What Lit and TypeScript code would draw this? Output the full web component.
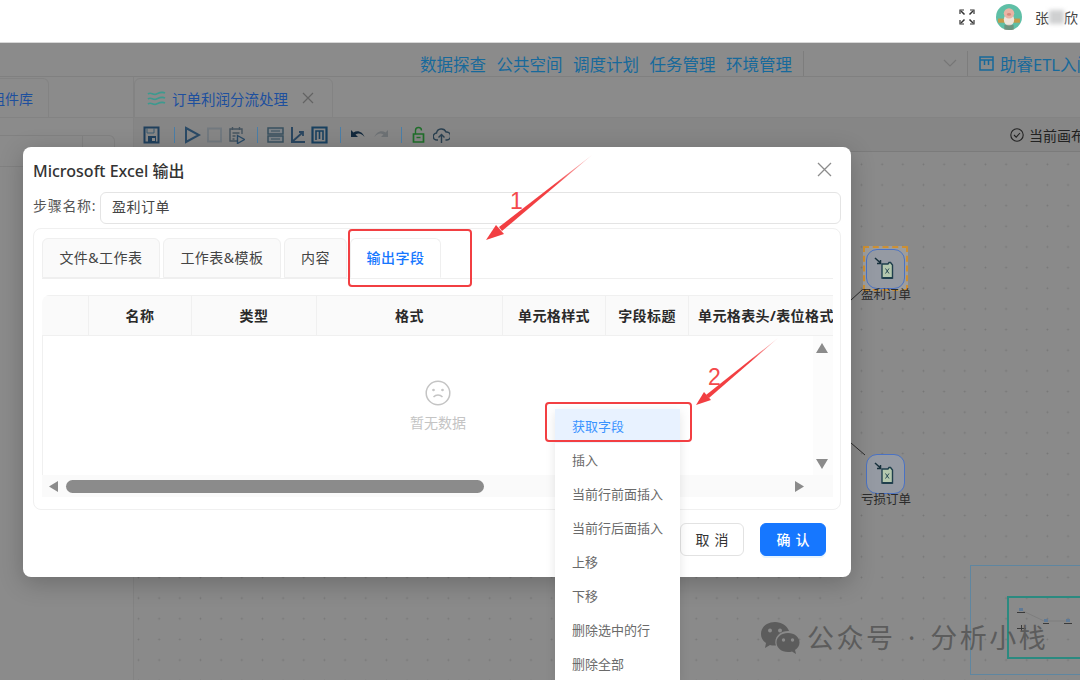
import { LitElement, html, css, svg } from 'lit';
import { customElement } from 'lit/decorators.js';

const NAV = ['数据探查', '公共空间', '调度计划', '任务管理', '环境管理'];
const TABS = [
  { label: '文件&工作表', width: 118 },
  { label: '工作表&模板', width: 118 },
  { label: '内容', width: 63 },
  { label: '输出字段', width: 91 },
];
const COLS = ['', '名称', '类型', '格式', '单元格样式', '字段标题', '单元格表头/表位格式'];
const MENU = ['获取字段', '插入', '当前行前面插入', '当前行后面插入', '上移', '下移', '删除选中的行', '删除全部'];

const excelIcon = html`<svg width="24" height="24" viewBox="0 0 24 24">
  <path d="M8 7h6l1-1.5h1.500L18.500 8v13H8z" fill="#b4c8ae" stroke="#1f3f4d" stroke-width="1.400"/>
  <path d="M8.500 21h10" stroke="#1f3f4d" stroke-width="2"/>
  <path d="M11.500 11.500l3.500 5M15 11.500l-3.500 5" stroke="#2a4a55" stroke-width="1" fill="none"/>
  <path d="M1 1l5.500 5M3 6.500h3.500V3" stroke="#17303c" stroke-width="1.500" fill="none"/>
</svg>`;

const toolbarIcons = {
  save: svg`<path d="M1.500 1.500h14v15h-14z" fill="none" stroke="#1f3f5c" stroke-width="2"/><path d="M4 2v5h7V2" fill="none" stroke="#3a5a70" stroke-width="1"/><path d="M5 10h8v6H5z" fill="#1f3f5c"/><path d="M9 12h3v3H9z" fill="#8b8b8b"/>`,
  play: svg`<path d="M2 2l13 7-13 7z" fill="none" stroke="#2a4a66" stroke-width="2"/>`,
  stop: svg`<path d="M2 2.500h13v13H2z" fill="none" stroke="#72797f" stroke-width="2"/>`,
  sched: svg`<path d="M9 15H2V3h12v5M4.500 1v3M11.500 1v3M4.500 7h7M4.500 10h3M4.500 13h2" fill="none" stroke="#46545f" stroke-width="1.400"/><path d="M9.500 9.500l7 4-7 4z" fill="none" stroke="#2a4a66" stroke-width="1.400"/>`,
  rows: svg`<path d="M1 2h15v6H1zM1 10h15v6H1z" fill="#7d8388" stroke="#39505f" stroke-width="1.500"/><path d="M4 5h9M4 13h9" stroke="#39505f" stroke-width="1.200"/>`,
  axis: svg`<path d="M3 1v15h13" fill="none" stroke="#2a4660" stroke-width="2"/><path d="M4 15l9-8M10 6h4v4" fill="none" stroke="#2a4660" stroke-width="1.800"/>`,
  mbox: svg`<path d="M1.500 1.500h14v15h-14z" fill="none" stroke="#18405f" stroke-width="2.200"/><path d="M5 14V5h7v9M8.500 5v8" fill="none" stroke="#18405f" stroke-width="1.600"/>`,
  undo: svg`<path d="M1 4l0 7 7 0-2.500-2.500c3-2 6.500-1 9 2.500-1.500-5-7-7.500-11-4.500z" fill="#12283c"/>`,
  redo: svg`<path d="M16 4l0 7-7 0 2.500-2.500c-3-2-6.500-1-9 2.500 1.500-5 7-7.500 11-4.500z" fill="#6d7174"/>`,
  lock: svg`<path d="M2.500 8h10v8h-10z" fill="none" stroke="#1f6e2a" stroke-width="1.700"/><path d="M4.500 8V4.500a3 3 0 0 1 6 0" fill="none" stroke="#1f6e2a" stroke-width="1.400"/><path d="M5.500 11.500h4" stroke="#1f6e2a" stroke-width="1.400"/>`,
  cloud: svg`<path d="M5 14H4a3.500 3.500 0 0 1-.5-7 5 5 0 0 1 9.500-1 4 4 0 0 1 1 8h-1.500" fill="none" stroke="#2a4050" stroke-width="1.400"/><path d="M8.500 17V9M5.500 11.500l3-3 3 3" fill="none" stroke="#2a4050" stroke-width="1.400"/>`,
};

function tool(name: keyof typeof toolbarIcons) {
  return html`<svg class="tool" width="17" height="18" viewBox="0 0 17 18">${toolbarIcons[name]}</svg>`;
}

@customElement('app-root')
export class AppRoot extends LitElement {
  static styles = css`
    :host {
      display: block;
      position: relative;
      width: 1080px;
      height: 680px;
      overflow: hidden;
      background: #8b8b8b;
      font-family: 'Noto Sans', 'Noto Sans CJK SC', sans-serif;
      color: #333;
    }
    .topbar {
      height: 34px;
      padding-bottom: 8px;
      padding-right: 2px;
      background: #fff;
      border-bottom: 1px solid #d8d8d8;
      display: flex;
      align-items: center;
      justify-content: flex-end;
    }
    .avatar { margin: 0 13px 0 21px; }
    .user { display: flex; font-size: 14px; color: #444; white-space: nowrap; align-items: center; }
    .smudge { width: 15px; height: 14px; background: #cfd0d1; filter: blur(2px); }
    .nav {
      height: 34px;
      box-sizing: border-box;
      border-bottom: 1px solid #808080;
      display: flex;
      align-items: flex-end;
      justify-content: flex-end;
      white-space: nowrap;
      overflow: hidden;
      color: #17699b;
      font-size: 16.5px;
    }
    .nav-items { display: flex; gap: 10.5px; height: 25px; align-items: center; padding-right: 11px; }
    .nav-right {
      flex: none;
      width: 277px;
      height: 25px;
      box-sizing: border-box;
      border-left: 1px solid #7d7d7d;
      display: flex;
      align-items: center;
      justify-content: flex-end;
    }
    .nav-right .more { flex: none; margin-right: 10px; }
    .guide {
      flex: none;
      width: 113px;
      height: 25px;
      box-sizing: border-box;
      border-left: 1px solid #7d7d7d;
      display: flex;
      align-items: center;
      gap: 6px;
      padding-left: 11px;
      overflow: hidden;
    }
    .guide svg { flex: none; }
    .body { display: grid; grid-template-columns: 134px 1fr; height: 603px; }
    .left { border-right: 1px solid #838383; overflow: hidden; }
    .left-tab {
      width: 49px;
      height: 40px;
      margin-top: 1px;
      box-sizing: border-box;
      border: 1px solid #838383;
      border-left: 0;
      border-radius: 0 6px 0 0;
      display: flex;
      align-items: center;
      justify-content: flex-end;
      padding-right: 15px;
      font-size: 14px;
      color: #1d4f9e;
      white-space: nowrap;
    }
    .left-tabline { height: 1px; background: #838383; margin: -1px 0 0 49px; }
    .search {
      width: 115px;
      height: 32px;
      margin-top: 17px;
      box-sizing: border-box;
      border: 1px solid #818181;
      border-left: 0;
      border-radius: 0 6px 6px 0;
      position: relative;
    }
    .search::after { content: ''; position: absolute; left: 82px; top: 0; bottom: 0; width: 1px; background: #818181; }
    .main { display: flex; flex-direction: column; min-width: 0; }
    .doc-tabs { height: 41px; flex: none; padding-top: 1px; box-sizing: border-box; border-bottom: 1px solid #838383; }
    .doc-tab {
      width: 199px;
      height: 40px;
      box-sizing: border-box;
      border: 1px solid #838383;
      border-radius: 6px 6px 0 0;
      display: flex;
      align-items: center;
      padding-left: 12px;
      font-size: 14.5px;
      color: #1d4f9e;
      white-space: nowrap;
    }
    .wave { margin-right: 6px; flex: none; }
    .doc-tab .close { margin-left: 14px; }
    .toolbar {
      flex: none;
      height: 34px;
      box-sizing: border-box;
      background: #868686;
      border-bottom: 1px solid #7b7b7b;
      display: flex;
      align-items: center;
      padding-left: 9px;
      white-space: nowrap;
      overflow: hidden;
      font-size: 14px;
      color: #222;
    }
    .tool { flex: none; margin-right: 5px; }
    .tool:first-child { margin-right: 7px; }
    .sep { flex: none; width: 1px; height: 16px; background: #4a7ea8; margin: 0 9px 0 7px; }
    .status { margin-left: auto; flex: none; width: 70px; display: flex; align-items: center; gap: 5px; overflow: hidden; }
    .canvas {
      position: relative;
      flex: 1;
      background-color: #8a8a8a;
      background-image: radial-gradient(circle, #767676 0.8px, transparent 1.1px);
      background-size: 20.67px 20.67px;
      background-position: -5.8px 2px;
    }
    .node {
      position: absolute;
      width: 39px;
      height: 40px;
      box-sizing: border-box;
      border: 1.5px solid #4a72c4;
      border-radius: 11px;
      background: #959aa3;
      display: flex;
      align-items: center;
      justify-content: center;
    }
    .pick { position: absolute; width: 45px; height: 45px; box-sizing: border-box; border: 2px dashed #cc8f33; background: #9d9d9d; }
    .node-label { position: absolute; width: 60px; text-align: center; font-size: 12.5px; line-height: 16px; color: #2b2b2b; white-space: nowrap; }
    .wires { position: absolute; left: 0; top: 0; }
    .minimap { position: absolute; left: 836px; top: 413px; width: 120px; height: 110px; box-sizing: border-box; border: 1px solid #5f86a0; border-right: 0; }
    .minimap-view { position: absolute; left: 36px; top: 30px; width: 90px; height: 63px; box-sizing: border-box; border: 2px solid #2b8a80; border-right: 0; }

    .modal {
      position: absolute;
      left: 23px;
      top: 147px;
      width: 828px;
      height: 430px;
      box-sizing: border-box;
      background: #fff;
      border-radius: 8px;
      padding: 0 10px;
      box-shadow: 0 6px 24px rgba(0, 0, 0, 0.22);
    }
    .modal-head { height: 45px; display: flex; align-items: center; justify-content: space-between; padding-right: 9px; }
    .modal-title { font-size: 16px; font-weight: 500; color: #333; }
    .step { display: flex; align-items: center; height: 32px; }
    .step label { width: 67px; flex: none; font-size: 14px; letter-spacing: 0.7px; color: #555; white-space: nowrap; margin-top: -7px; }
    .step-input {
      flex: 1;
      height: 32px;
      box-sizing: border-box;
      border: 1px solid #e4e4e4;
      border-radius: 6px;
      padding-left: 11px;
      font-size: 14px;
      letter-spacing: 0.5px;
      line-height: 28px;
      color: #444;
    }
    .panel {
      margin-top: 4px;
      height: 282px;
      box-sizing: border-box;
      border: 1px solid #f0f0f0;
      border-radius: 8px;
      padding: 9px 7px 0 8px;
    }
    .tabs { display: flex; gap: 3px; height: 40px; border-bottom: 1px solid #efefef; }
    .tab {
      height: 40px;
      box-sizing: border-box;
      border: 1px solid #efefef;
      border-radius: 6px 6px 0 0;
      background: #fafafa;
      font-size: 14px;
      letter-spacing: 0.5px;
      line-height: 38px;
      text-align: center;
      color: #444;
      white-space: nowrap;
    }
    .tab.active { background: #fff; color: #1677ff; font-weight: 500; border-bottom-color: #fff; }
    .table {
      position: relative;
      margin-top: 16px;
      height: 202px;
      width: 791px;
      overflow: hidden;
      border-radius: 8px 0 0 0;
      box-sizing: border-box;
      display: flex;
      flex-direction: column;
    }
    .thead {
      flex: none;
      height: 41px;
      display: grid;
      grid-template-columns: 47px 103px 125px 186px 103px 83px 145px;
      background: #fafafa;
      border-top: 1px solid #f0f0f0;
      border-bottom: 1px solid #f0f0f0;
      box-sizing: border-box;
      padding-bottom: 2px;
      font-size: 14px;
      letter-spacing: 0.4px;
      font-weight: 700;
      color: #2a2a2a;
    }
    .th { display: flex; align-items: center; justify-content: center; margin-bottom: -2px; padding-bottom: 2px; border-right: 1px solid #f0f0f0; white-space: nowrap; overflow: hidden; }
    .th:last-child { border-right: 0; justify-content: flex-start; padding-left: 9px; }
    .tbody { flex: 1; display: flex; min-height: 0; border-left: 1px solid #f0f0f0; }
    .empty { flex: 1; display: flex; flex-direction: column; align-items: center; padding: 44px 0 0 20px; font-size: 14px; line-height: 20px; color: #c4c4c4; gap: 7px; box-sizing: border-box; }
    .vbar { flex: none; width: 20px; background: #fcfcfc; display: flex; flex-direction: column; align-items: center; justify-content: space-between; padding: 7px 2px 6px 0; box-sizing: border-box; }
    .hbar { flex: none; height: 22px; background: #fafafa; display: flex; align-items: center; padding-left: 7px; }
    .thumb { width: 418px; height: 13px; border-radius: 7px; background: #8b8b8b; margin-left: 8px; }
    .hbar .next { margin-left: 311px; }
    .footer { display: flex; justify-content: flex-end; gap: 16px; margin-top: 13px; padding-right: 15px; }
    .btn {
      height: 33px;
      box-sizing: border-box;
      border-radius: 6px;
      font-size: 14px;
      line-height: 31px;
      text-align: center;
      letter-spacing: 5px;
      text-indent: 5px;
    }
    .btn.cancel { width: 64px; border: 1px solid #e2e2e2; color: #333; background: #fff; }
    .btn.ok { width: 66px; border: 1px solid #1677ff; background: #1677ff; color: #fff; font-weight: 500; box-shadow: 0 2px 0 rgba(5, 145, 255, 0.1); }

    .menu {
      position: absolute;
      left: 555px;
      top: 409px;
      width: 125px;
      background: #fff;
      box-shadow: 0 3px 10px rgba(0, 0, 0, 0.1);
      font-size: 13px;
      color: #6a6a6a;
    }
    .menu div { height: 34px; line-height: 34px; padding-left: 17px; white-space: nowrap; }
    .menu div.hot { background: #e8f2ff; color: #3a93ff; }

    .mark { position: absolute; box-sizing: border-box; border: 2.5px solid #f23f42; border-radius: 4px; }
    .mark.a { left: 348px; top: 229px; width: 124px; height: 58px; }
    .mark.b { left: 545px; top: 402px; width: 147px; height: 40px; }
    .arrows { position: absolute; left: 0; top: 0; pointer-events: none; }
    .num { position: absolute; color: #f4494b; font-family: 'Liberation Sans', sans-serif; font-size: 23px; line-height: 26px; font-weight: 400; }
    .watermark {
      position: absolute;
      left: 760px;
      top: 619px;
      display: flex;
      align-items: center;
      gap: 7px;
      font-size: 27px;
      line-height: 38px;
      letter-spacing: 2.500px;
      word-spacing: 3px;
      color: #5c5c5c;
      white-space: nowrap;
    }
  `;

  private renderMinimap() {
    return html`<div class="minimap">
      <div class="minimap-view">
        <svg width="88" height="59" viewBox="0 0 88 59">
          <path d="M14 13l21 10h22" stroke="#767676" stroke-width="0.600" fill="none"/>
          <path d="M10 10h4v3h-4zM35 21h4v3h-4zM57 21h4v3h-4z" fill="#5f7a96"/>
          <path d="M8 14h8v1H8zM8 30h9v1H8zM12 27h1v6h-1zM34 25h6v1h-6zM55 25h8v1h-8z" fill="#3a3a3a"/>
        </svg>
      </div>
    </div>`;
  }

  render() {
    return html`
      <div class="topbar">
        <svg width="16" height="16" viewBox="0 0 16 16" fill="none" stroke="#333" stroke-width="1.500">
          <path d="M2 2l3.500 3.500M14 2l-3.500 3.500M2 14l3.500-3.500M14 14l-3.500-3.500"/>
          <path d="M1 5V1h4M11 1h4v4M1 11v4h4M15 11v4h-4" stroke-width="1.200"/>
        </svg>
        <svg class="avatar" width="26" height="26" viewBox="0 0 25 25">
          <circle cx="12.500" cy="12.500" r="12.500" fill="#5fbfa6"/>
          <path d="M2 14h21v4H2z" fill="#c49a4a"/>
          <ellipse cx="12.500" cy="15" rx="5" ry="6" fill="#eee6dc"/>
          <circle cx="12.500" cy="9" r="5" fill="#eab3a4"/>
          <ellipse cx="12.500" cy="10" rx="2" ry="1.400" fill="#d48a7c"/>
          <path d="M8 20h9v5H8z" fill="#7a6a5a" opacity="0.500"/>
        </svg>
        <div class="user">张<span class="smudge"></span>欣</div>
      </div>

      <div class="nav">
        <div class="nav-items">${NAV.map((n) => html`<span>${n}</span>`)}</div>
        <div class="nav-right">
          <svg class="more" width="14" height="9" viewBox="0 0 14 9" fill="none" stroke="#767676" stroke-width="1.200"><path d="M1 1l6 6 6-6"/></svg>
          <div class="guide">
            <svg width="15" height="15" viewBox="0 0 15 15" fill="none" stroke="#17699b" stroke-width="1.500"><path d="M1 1h13v13H1zM1 4h13M5.500 4v5M9.500 4v5"/></svg>
            <span>助睿ETL入门</span>
          </div>
        </div>
      </div>

      <div class="body">
        <div class="left">
          <div class="left-tab">组件库</div>
          <div class="left-tabline"></div>
          <div class="search"></div>
        </div>
        <div class="main">
          <div class="doc-tabs">
            <div class="doc-tab">
              <svg class="wave" width="19" height="15" viewBox="0 0 19 15" fill="none" stroke="#3d9a8f" stroke-width="1.700">
                <path d="M1 3c3-2.500 5 1.500 8.500 0S15 .5 18 2M1 8c3-2.500 5 1.500 8.500 0S15 5.500 18 7M1 13c3-2.500 5 1.500 8.500 0s5.500-2.500 8.500-1"/>
              </svg>
              订单利润分流处理
              <svg class="close" width="12" height="12" viewBox="0 0 12 12" stroke="#636363" stroke-width="1.200"><path d="M1 1l10 10M11 1L1 11"/></svg>
            </div>
          </div>
          <div class="toolbar">
            ${tool('save')}<span class="sep"></span>
            ${tool('play')}${tool('stop')}${tool('sched')}<span class="sep"></span>
            ${tool('rows')}${tool('axis')}${tool('mbox')}<span class="sep"></span>
            ${tool('undo')}${tool('redo')}<span class="sep"></span>
            ${tool('lock')}${tool('cloud')}
            <div class="status">
              <svg style="flex:none" width="14" height="14" viewBox="0 0 14 14" fill="none" stroke="#222" stroke-width="1.100"><circle cx="7" cy="7" r="6.200"/><path d="M4 7l2.200 2.200L10 5"/></svg>
              <span>当前画布</span>
            </div>
          </div>
          <div class="canvas">
            <svg class="wires" width="800" height="340" viewBox="0 0 800 340" fill="none" stroke="#2b2b2b" stroke-width="1">
              <path d="M717 148l11-10M717 291l14 12"/>
            </svg>
            <div class="pick" style="left:729px;top:94px"></div>
            <div class="node" style="left:732px;top:97px">${excelIcon}</div>
            <div class="node-label" style="left:722px;top:135px">盈利订单</div>
            <div class="node" style="left:732px;top:302px">${excelIcon}</div>
            <div class="node-label" style="left:722px;top:340px">亏损订单</div>
            ${this.renderMinimap()}
          </div>
        </div>
      </div>

      <div class="modal">
        <div class="modal-head">
          <div class="modal-title">Microsoft Excel 输出</div>
          <svg width="15" height="15" viewBox="0 0 15 15" stroke="#8c8c8c" stroke-width="1.300"><path d="M1 1l13 13M14 1L1 14"/></svg>
        </div>
        <div class="step">
          <label>步骤名称:</label>
          <div class="step-input">盈利订单</div>
        </div>
        <div class="panel">
          <div class="tabs">
            ${TABS.map((t, i) => html`<div class="tab ${i === 3 ? 'active' : ''}" style="width:${t.width}px">${t.label}</div>`)}
          </div>
          <div class="table">
            <div class="thead">${COLS.map((c) => html`<div class="th">${c}</div>`)}</div>
            <div class="tbody">
              <div class="empty">
                <svg width="26" height="26" viewBox="0 0 26 26" fill="none" stroke="#c4c4c4" stroke-width="1.500">
                  <circle cx="13" cy="13" r="11.800"/>
                  <path d="M8.500 17c2.500-2.600 6.500-2.600 9 0"/>
                  <circle cx="8.500" cy="10" r="0.600"/><circle cx="17.500" cy="10" r="0.600"/>
                </svg>
                暂无数据
              </div>
              <div class="vbar">
                <svg width="12" height="10" viewBox="0 0 12 10"><path d="M6 0l6 10H0z" fill="#8b8b8b"/></svg>
                <svg width="12" height="10" viewBox="0 0 12 10"><path d="M6 10l6-10H0z" fill="#8b8b8b"/></svg>
              </div>
            </div>
            <div class="hbar">
              <svg width="9" height="11" viewBox="0 0 9 11"><path d="M0 5.500L9 0v11z" fill="#8b8b8b"/></svg>
              <div class="thumb"></div>
              <svg class="next" width="9" height="11" viewBox="0 0 9 11"><path d="M9 5.500L0 0v11z" fill="#8b8b8b"/></svg>
            </div>
          </div>
        </div>
        <div class="footer">
          <div class="btn cancel">取消</div>
          <div class="btn ok">确认</div>
        </div>
      </div>

      <div class="menu">
        ${MENU.map((m, i) => html`<div class=${i === 0 ? 'hot' : ''}>${m}</div>`)}
      </div>

      <div class="mark a"></div>
      <div class="mark b"></div>
      <svg class="arrows" width="1080" height="680" viewBox="0 0 1080 680">
        <defs>
          <linearGradient id="fade1" x1="592" y1="155" x2="500" y2="232" gradientUnits="userSpaceOnUse">
            <stop offset="0" stop-color="#f23f42" stop-opacity="0.250"/>
            <stop offset="0.400" stop-color="#f23f42"/>
          </linearGradient>
          <linearGradient id="fade2" x1="778" y1="338" x2="708" y2="396" gradientUnits="userSpaceOnUse">
            <stop offset="0" stop-color="#f23f42" stop-opacity="0.250"/>
            <stop offset="0.400" stop-color="#f23f42"/>
          </linearGradient>
        </defs>
        <path d="M592 155L499 227l3 4z" fill="url(#fade1)"/>
        <path d="M486 240l10-15 8 9z" fill="#f23f42"/>
        <path d="M778 338L706 395l3 3z" fill="url(#fade2)"/>
        <path d="M696 405l8-13 7 8z" fill="#f23f42"/>
      </svg>
      <div class="num" style="left:510px;top:188px">1</div>
      <div class="num" style="left:708px;top:364px">2</div>

      <div class="watermark">
        <svg width="40" height="34" viewBox="0 0 40 34" fill="#5c5c5c">
          <path d="M15 1C7 1 1 6 1 13c0 4 2 7 5 9l-1 5 5-3c1 .3 3 .6 5 .6h1c-.5-1.500-.7-2.500-.7-3.600 0-6.500 6-11 12.700-11h1C27 4.500 21.500 1 15 1z"/>
          <path d="M28 12c-6.500 0-11.500 4.200-11.500 9.500S21.500 31 28 31c1.500 0 3-.2 4-.6l4 2.600-1-4c2.800-1.800 4.500-4.500 4.500-7.500C39.500 16.200 34.500 12 28 12z"/>
          <circle cx="10" cy="9.500" r="2" fill="#8b8b8b"/><circle cx="20" cy="9.500" r="2" fill="#8b8b8b"/>
          <circle cx="23.500" cy="19" r="1.700" fill="#8b8b8b"/><circle cx="32.500" cy="19" r="1.700" fill="#8b8b8b"/>
        </svg>
        <span>公众号 · 分析小栈</span>
      </div>
    `;
  }
}
